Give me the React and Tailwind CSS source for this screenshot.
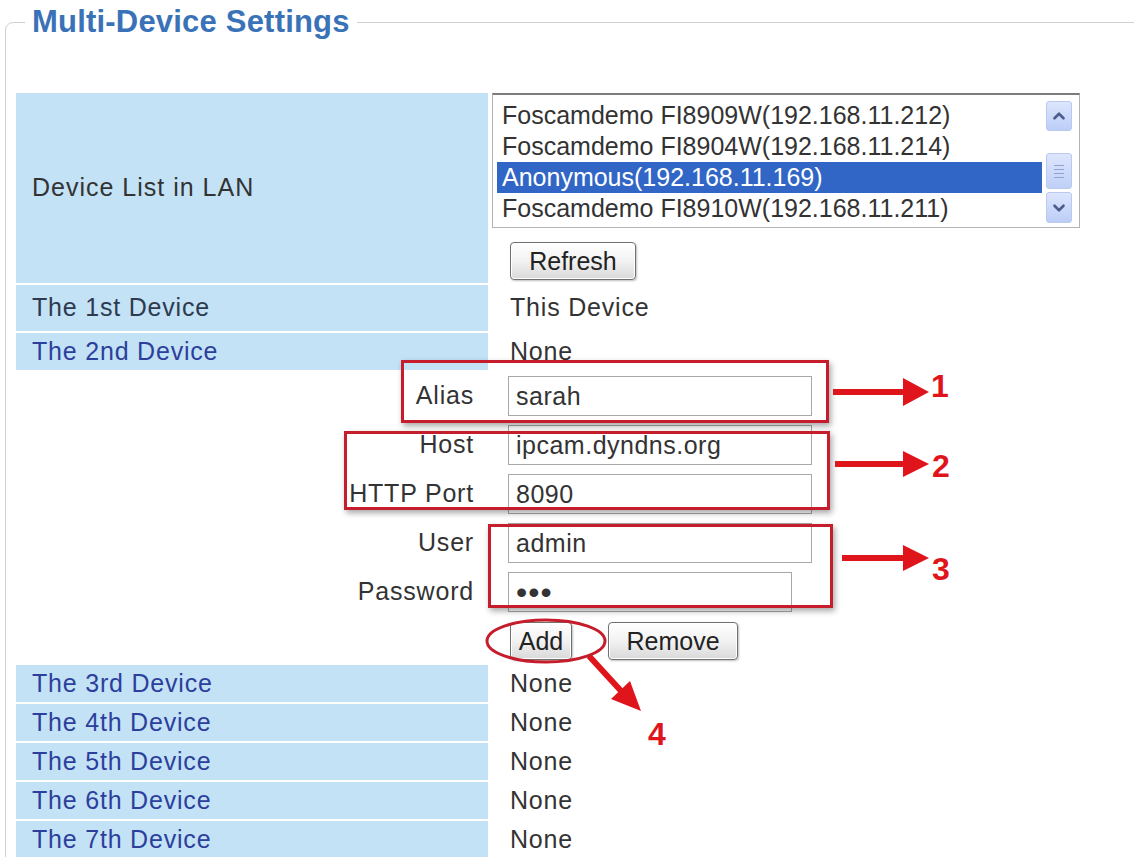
import React from "react";
import { ChevronUp, ChevronDown } from "lucide-react";

const lanDevices = [
  "Foscamdemo FI8909W(192.168.11.212)",
  "Foscamdemo FI8904W(192.168.11.214)",
  "Anonymous(192.168.11.169)",
  "Foscamdemo FI8910W(192.168.11.211)",
];

const moreDevices = ["The 3rd Device", "The 4th Device", "The 5th Device", "The 6th Device", "The 7th Device"];

function XpButton({ children, width }) {
  return (
    <button
      className={`h-[38px] ${width} rounded-[4px] border border-[#707070] bg-gradient-to-b from-white via-[#f2f2f2] to-[#d9d9d9] text-[25px] leading-none text-[#222] shadow-[inset_0_0_0_1px_#ffffff,1px_1px_2px_rgba(0,0,0,0.25)]`}
    >
      {children}
    </button>
  );
}

function FormRow({ label, value, type = "text", width = "w-[304px]" }) {
  return (
    <div className="flex h-[40px] items-center">
      <div className="w-[472px] pr-[14px] text-right tracking-[0.8px]">{label}</div>
      <input
        readOnly
        type={type}
        value={value}
        className={`ml-[20px] h-[40px] ${width} border border-[#a8a8a8] bg-white pl-[7px] text-[#333] outline-none ${type === "password" ? "text-[32px] tracking-[1px] text-[#111]" : "text-[25px] tracking-[0.5px]"}`}
      />
    </div>
  );
}

export default function App() {
  return (
    <div className="relative h-[857px] w-[1134px] overflow-hidden bg-white font-['Liberation_Sans',Arial,sans-serif] text-[25px] text-[#333]">
      <fieldset className="ml-[5px] mt-[2px] w-[1200px] rounded-tl-[8px] border border-[#d0d0d0] pb-10 pl-[10px]">
        <legend className="ml-[9px] px-[7px] text-[31px] font-bold leading-[40px] tracking-[0.2px] text-[#3a72b8]">
          Multi-Device Settings
        </legend>

        <div className="mt-[51px] flex flex-col">
          {/* Device list in LAN */}
          <div className="flex h-[190px] gap-[4px]">
            <div className="flex w-[472px] items-center bg-[#c3e2f6] pl-4 tracking-[1px]">Device List in LAN</div>
            <div className="flex flex-col">
              <div className="flex h-[135px] w-[588px] border border-[#b4b4b4] border-t-2 border-t-[#7c7c7c] bg-white pl-[4px] pt-[5px]">
                <div className="flex w-[545px] flex-col">
                  {lanDevices.map((d, i) => (
                    <div
                      key={d}
                      className={`h-[31px] pl-[5px] leading-[31px] whitespace-nowrap ${i === 2 ? "bg-[#3166c6] text-white" : "text-[#333]"}`}
                    >
                      {d}
                    </div>
                  ))}
                </div>
                <div className="ml-[4px] flex w-[28px] flex-col pt-[1px]">
                  <div className="flex h-[30px] w-[26px] items-center justify-center rounded-[3px] border border-[#b9c9ef] bg-gradient-to-b from-[#dde6fd] to-[#bccdf7]">
                    <ChevronUp size={18} strokeWidth={3.5} color="#4a5d8c" />
                  </div>
                  <div className="h-[22px]" />
                  <div className="flex h-[36px] w-[26px] flex-col items-center justify-center gap-[3px] rounded-[3px] border border-[#b9c9ef] bg-gradient-to-b from-[#dde6fd] to-[#bfcff7]">
                    <div className="h-px w-[10px] bg-[#8fa3d4]" />
                    <div className="h-px w-[10px] bg-[#8fa3d4]" />
                    <div className="h-px w-[10px] bg-[#8fa3d4]" />
                    <div className="h-px w-[10px] bg-[#8fa3d4]" />
                  </div>
                  <div className="h-[3px]" />
                  <div className="flex h-[31px] w-[26px] items-center justify-center rounded-[3px] border border-[#b9c9ef] bg-gradient-to-b from-[#dde6fd] to-[#bccdf7]">
                    <ChevronDown size={18} strokeWidth={3.5} color="#4a5d8c" />
                  </div>
                </div>
              </div>
              <div className="ml-[18px] mt-[14px]">
                <XpButton width="w-[126px]">Refresh</XpButton>
              </div>
            </div>
          </div>

          {/* 1st device */}
          <div className="mt-[2px] flex h-[46px] items-center gap-[4px]">
            <div className="flex h-full w-[472px] items-center bg-[#c3e2f6] pl-4 tracking-[0.8px] text-[#2e3a4e]">The 1st Device</div>
            <div className="pl-[18px] tracking-[0.8px]">This Device</div>
          </div>

          {/* 2nd device */}
          <div className="mt-[2px] flex h-[37px] items-center gap-[4px]">
            <div className="flex h-full w-[472px] items-center bg-[#c3e2f6] pl-4 tracking-[0.8px] text-[#2d3f9c]">The 2nd Device</div>
            <div className="pl-[18px] tracking-[0.8px]">None</div>
          </div>

          {/* 2nd device editor */}
          <div className="flex flex-col gap-[9px] pt-[6px]">
            <FormRow label="Alias" value="sarah" />
            <FormRow label="Host" value="ipcam.dyndns.org" />
            <FormRow label="HTTP Port" value="8090" />
            <FormRow label="User" value="admin" />
            <FormRow label="Password" value="abc" type="password" width="w-[284px]" />
          </div>
          <div className="mt-[10px] flex gap-[36px] pl-[494px]">
            <XpButton width="w-[62px]">Add</XpButton>
            <XpButton width="w-[130px]">Remove</XpButton>
          </div>

          {/* remaining devices */}
          <div className="mt-[5px] flex flex-col gap-[2px]">
            {moreDevices.map((d) => (
              <div key={d} className="flex h-[37px] items-center gap-[4px]">
                <div className="flex h-full w-[472px] items-center bg-[#c3e2f6] pl-4 tracking-[0.8px] text-[#2d3f9c]">{d}</div>
                <div className="pl-[18px] tracking-[0.8px]">None</div>
              </div>
            ))}
          </div>
        </div>
      </fieldset>

      {/* red annotations */}
      <div className="absolute left-[401px] top-[360px] h-[63px] w-[428px] border-[3px] border-[#c51d2c] shadow-[2px_3px_6px_rgba(0,0,0,0.35)]" />
      <div className="absolute left-[344px] top-[431px] h-[79px] w-[486px] border-[3px] border-[#c51d2c] shadow-[2px_3px_6px_rgba(0,0,0,0.35)]" />
      <div className="absolute left-[488px] top-[524px] h-[84px] w-[345px] border-[3px] border-[#c51d2c] shadow-[2px_3px_6px_rgba(0,0,0,0.35)]" />

      <svg className="pointer-events-none absolute left-0 top-0" width="1134" height="857">
        <g fill="#e0151c" stroke="none">
          <rect x="833" y="389" width="72" height="6" />
          <polygon points="903,378 929,392 903,406" />
          <rect x="835" y="461" width="70" height="6" />
          <polygon points="903,451 929,464 903,477" />
          <rect x="842" y="555" width="63" height="6" />
          <polygon points="903,545 929,558 903,571" />
          <polygon points="611,699 641,711 630,681" />
        </g>
        <line x1="589" y1="656" x2="622" y2="692" stroke="#e0151c" strokeWidth="6" />
        <ellipse cx="546" cy="641" rx="59" ry="21" fill="none" stroke="#c51d2c" strokeWidth="3" />
      </svg>

      <div className="absolute left-[931px] top-[370px] text-[32px] font-bold leading-none text-[#e0151c]">1</div>
      <div className="absolute left-[932px] top-[450px] text-[32px] font-bold leading-none text-[#e0151c]">2</div>
      <div className="absolute left-[932px] top-[553px] text-[32px] font-bold leading-none text-[#e0151c]">3</div>
      <div className="absolute left-[648px] top-[718px] text-[32px] font-bold leading-none text-[#e0151c]">4</div>
    </div>
  );
}
